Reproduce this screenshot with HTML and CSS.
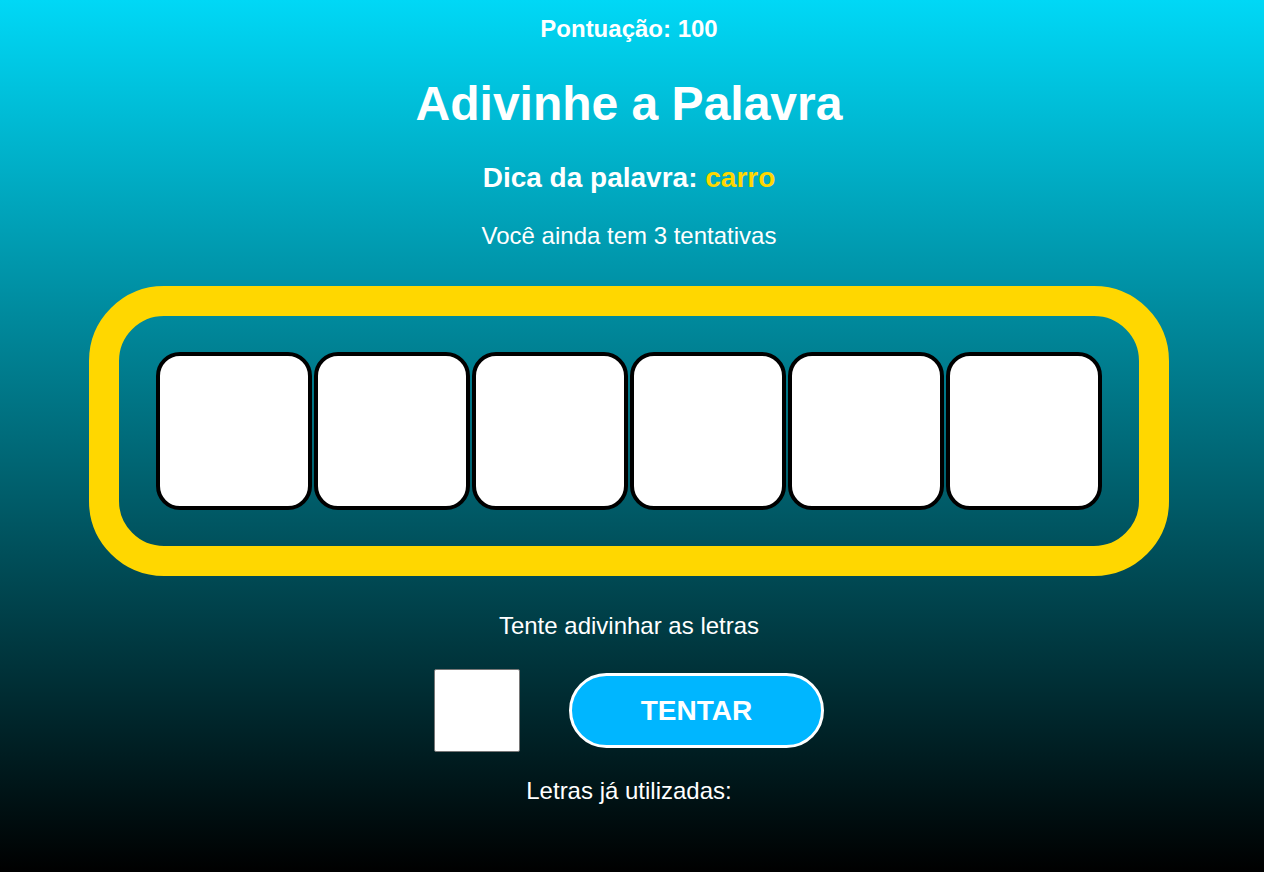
FILE: index.html
```html
<!DOCTYPE html>
<html lang="pt-BR">
<head>
<meta charset="utf-8">
<title>Adivinhe a Palavra</title>
<link rel="stylesheet" href="styles.css">
</head>
<body>
<main class="game">
  <div class="score">Pontuação: 100</div>
  <h1 class="title">Adivinhe a Palavra</h1>
  <div class="hint">Dica da palavra: <span class="hint-word">carro</span></div>
  <p class="attempts">Você ainda tem 3 tentativas</p>
  <section class="board">
    <div class="tile"></div>
    <div class="tile"></div>
    <div class="tile"></div>
    <div class="tile"></div>
    <div class="tile"></div>
    <div class="tile"></div>
  </section>
  <p class="prompt">Tente adivinhar as letras</p>
  <div class="guess-row">
    <input class="letter-input" type="text" maxlength="1" aria-label="Letra">
    <button class="try-btn" type="button">TENTAR</button>
  </div>
  <p class="used">Letras já utilizadas:</p>
</main>
</body>
</html>
```
FILE: styles.css
```css
html, body {
  margin: 0;
  padding: 0;
  height: 100%;
}
body {
  background: linear-gradient(to bottom, #00d8f6 0%, #000 100%);
  background-attachment: fixed;
  font-family: "Liberation Sans", Arial, sans-serif;
  color: #fff;
  line-height: 1.15;
}
.game {
  display: flex;
  flex-direction: column;
  align-items: center;
  padding: 15px 6px 0 0;
  min-height: 872px;
  box-sizing: border-box;
}
.score {
  font-size: 24px;
  font-weight: bold;
}
.title {
  margin: 33px 0 0;
  font-size: 48px;
  font-weight: bold;
  line-height: 1.15;
}
.hint {
  margin-top: 31px;
  font-size: 28px;
  font-weight: bold;
}
.hint-word {
  color: #ffd700;
}
.attempts {
  margin: 28px 0 0;
  font-size: 24px;
}
.board {
  margin-top: 36px;
  width: 1080px;
  box-sizing: border-box;
  border: 30px solid #ffd700;
  border-radius: 75px;
  padding: 36px;
  display: flex;
  justify-content: center;
}
.tile {
  width: 156px;
  height: 158px;
  box-sizing: border-box;
  margin: 0 1px;
  background: #fff;
  border: 4px solid #000;
  border-radius: 24px;
}
.prompt {
  margin: 36px 0 0;
  font-size: 24px;
}
.guess-row {
  margin-top: 30px;
  display: flex;
  align-items: center;
  gap: 49px;
}
.letter-input {
  width: 86px;
  height: 83px;
  box-sizing: border-box;
  margin: 0;
  background: #fff;
  border: 1px solid #767676;
  border-radius: 2px;
  font-family: inherit;
  font-size: 40px;
  text-align: center;
}
.try-btn {
  width: 255px;
  height: 75px;
  box-sizing: border-box;
  margin: 0;
  background: #00b6ff;
  border: 3px solid #fff;
  border-radius: 38px;
  color: #fff;
  font-family: "Liberation Sans", Arial, sans-serif;
  font-size: 28px;
  font-weight: bold;
  cursor: pointer;
}
.used {
  margin: 25px 0 0;
  font-size: 24px;
}
```
